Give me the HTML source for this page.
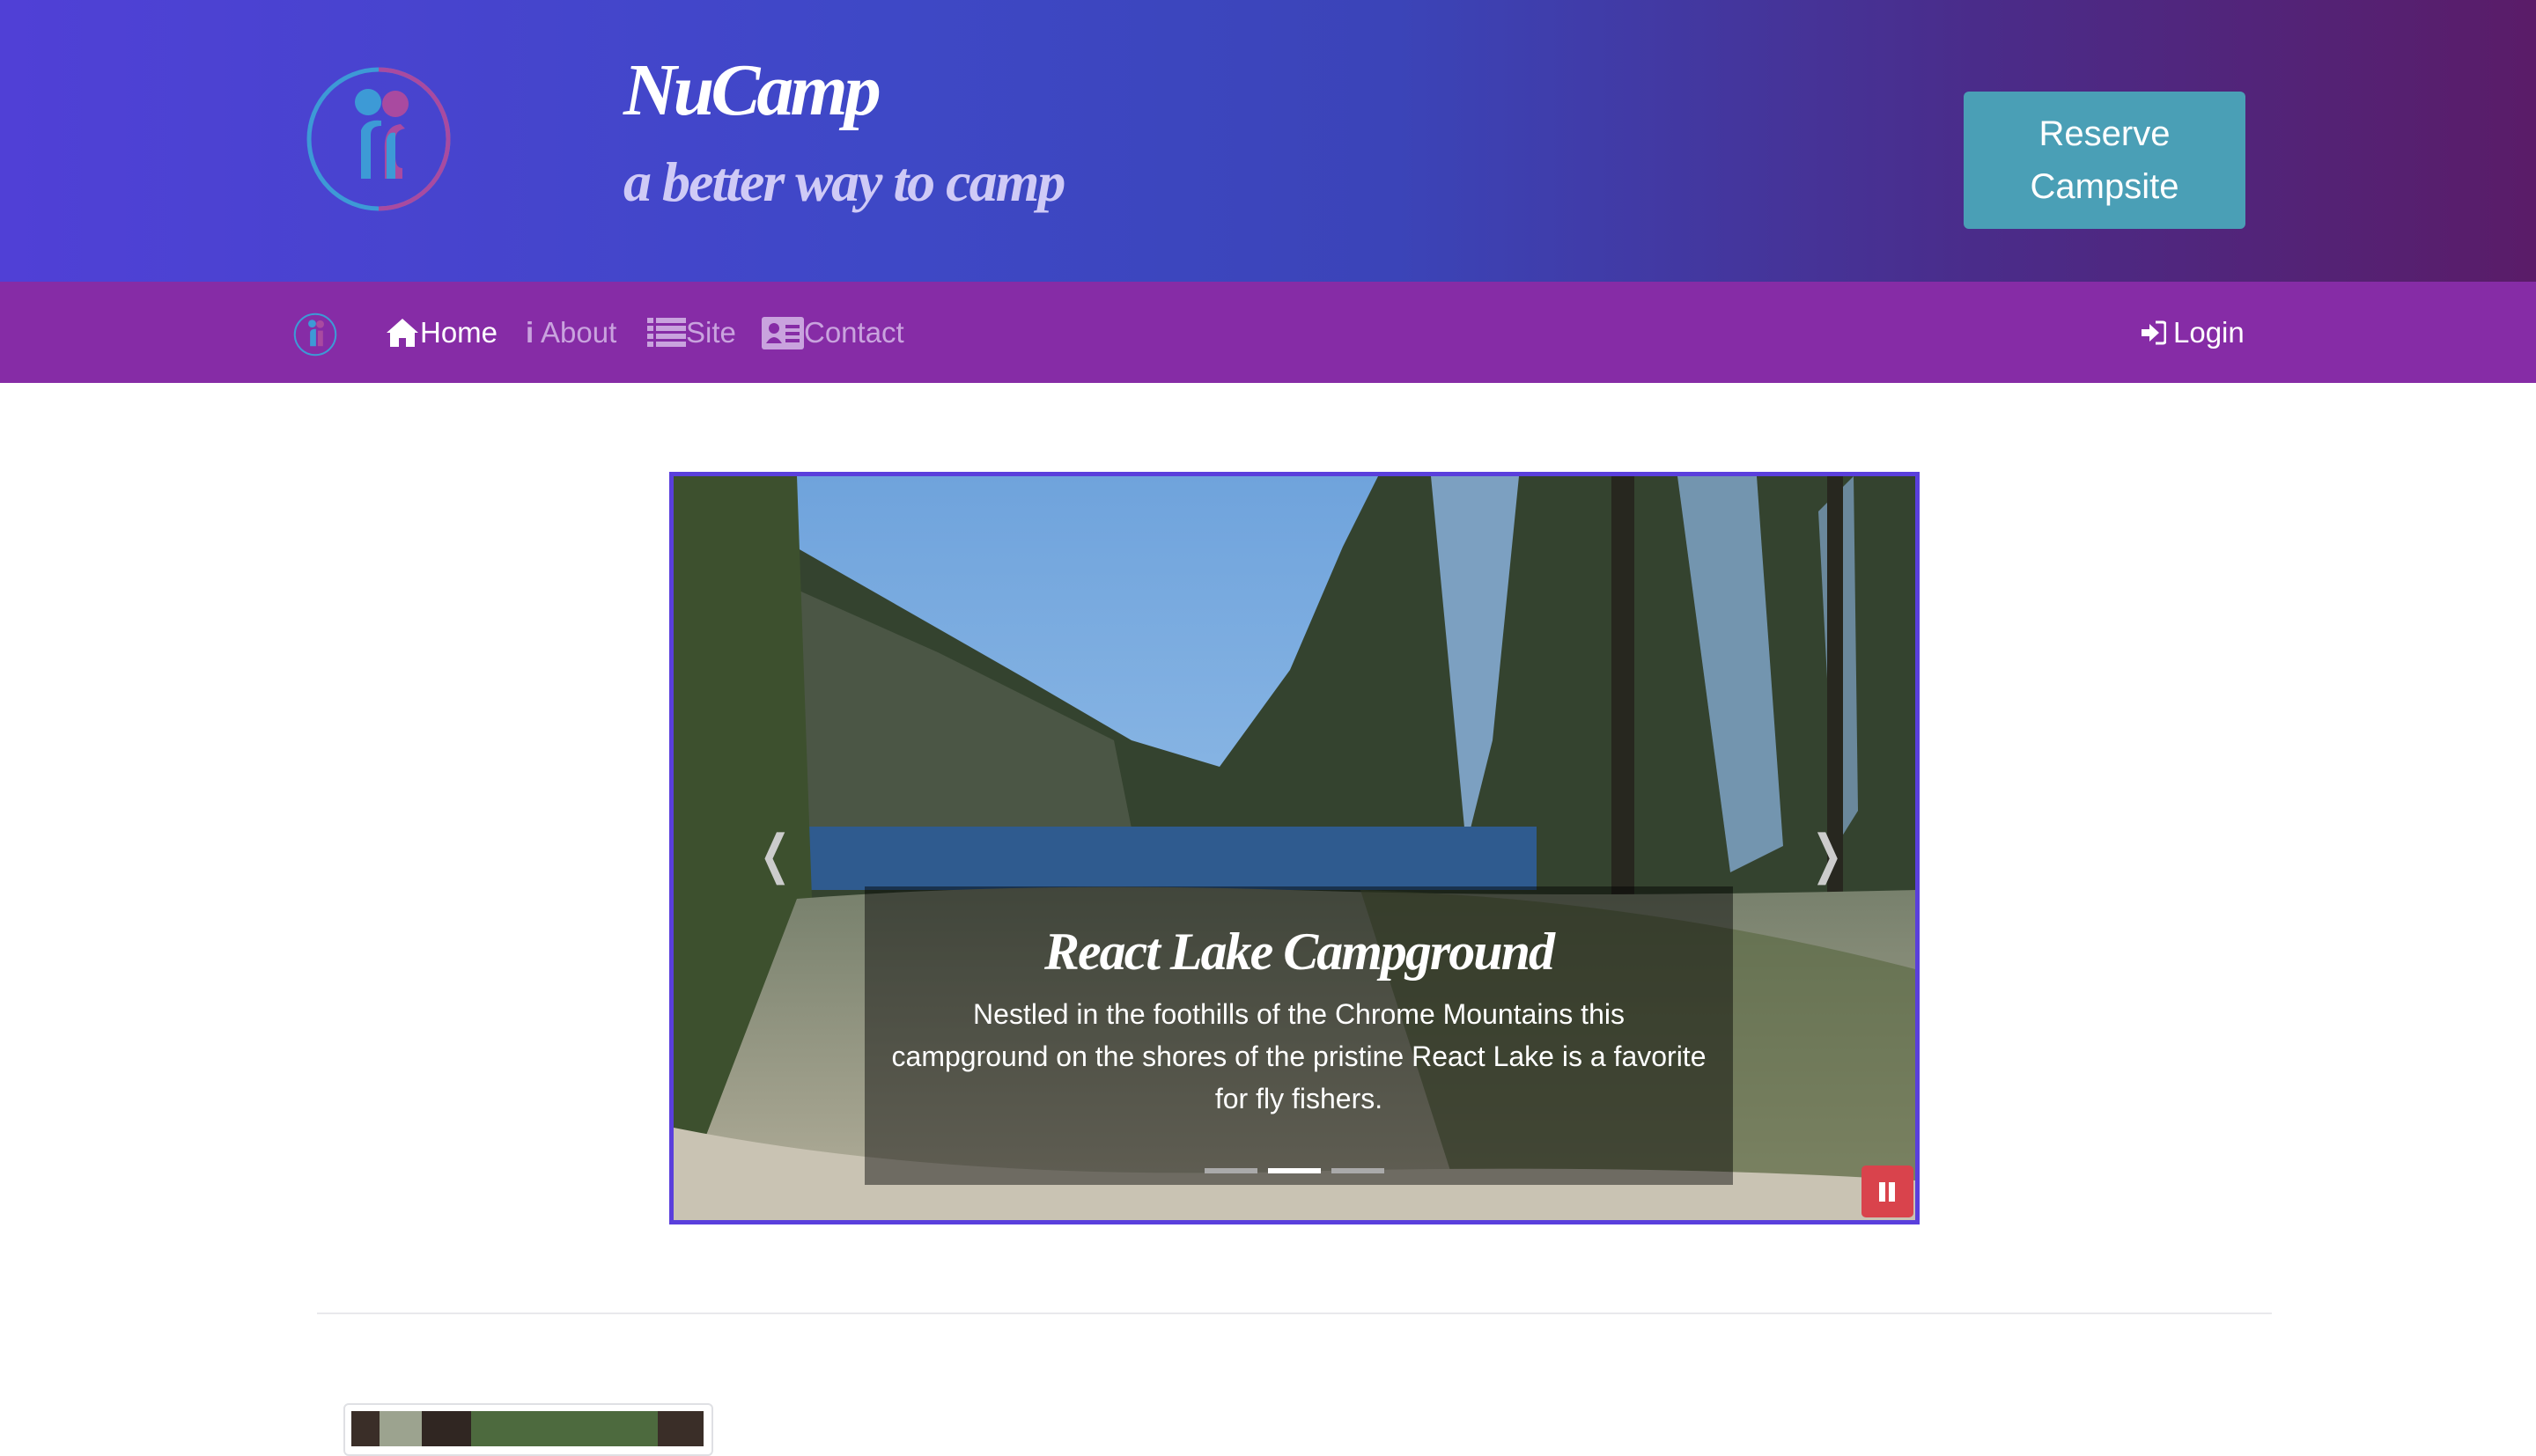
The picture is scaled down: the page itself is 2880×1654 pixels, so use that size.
<!DOCTYPE html>
<html><head><meta charset="utf-8">
<style>
*{margin:0;padding:0;box-sizing:border-box}
body{width:2880px;height:1636px;overflow:hidden;background:#fff;font-family:"Liberation Sans",sans-serif;position:relative}
.hdr{position:absolute;left:0;top:0;width:2880px;height:320px;background:linear-gradient(90deg,#5040d6 0%,#3e48c6 35%,#3b44b8 55%,#4a2c8a 78%,#5a1c68 100%)}
.nav{position:absolute;left:0;top:320px;width:2880px;height:115px;background:#862ca6}
.t1{position:absolute;left:708px;top:54px;font-family:"Liberation Serif",serif;font-style:italic;font-weight:bold;font-size:84px;color:#fff;letter-spacing:-4px}
.t2{position:absolute;left:708px;top:170px;font-family:"Liberation Serif",serif;font-style:italic;font-weight:bold;font-size:64px;color:#cfcaf6;letter-spacing:-2px}
.btn{position:absolute;left:2230px;top:104px;width:320px;height:156px;background:#4a9fb6;border-radius:6px;color:#fff;font-size:40px;text-align:center;line-height:60px;padding-top:18px}
.ni{position:absolute;top:359px;font-size:33px;color:#c9a3de}
.car{position:absolute;left:760px;top:536px;width:1420px;height:855px;border:5px solid #5a3fdc;overflow:hidden}
.cap{position:absolute;left:217px;top:466px;width:986px;height:339px;background:rgba(0,0,0,.45);text-align:center;color:#fff}
.cap h2{font-family:"Liberation Serif",serif;font-style:italic;font-weight:bold;font-size:60px;margin-top:40px;letter-spacing:-2px}
.cap p{font-size:32px;line-height:48px;margin-top:12px}
</style></head><body>
<div class="hdr"></div>
<svg style="position:absolute;left:345px;top:73px" width="170" height="170" viewBox="0 0 170 170">
<circle cx="85" cy="85" r="79" fill="none" stroke="#3d9ad6" stroke-width="5"/>
<path d="M85 6 A79 79 0 0 1 85 164" fill="none" stroke="#a94aa0" stroke-width="5"/>
<circle cx="73" cy="43" r="15" fill="#3d9ad6"/><circle cx="104" cy="45" r="15" fill="#a94aa0"/>
<path d="M65 130 V75 Q70 62 88 64 L88 70 Q76 70 76 80 V130Z" fill="#3d9ad6"/>
<path d="M110 68 Q90 70 92 100 V130 H112 L112 118 Q104 118 104 105 V85 Q104 75 115 73Z" fill="#a94aa0"/>
<path d="M94 130 V86 Q96 76 104 78 V130Z" fill="#3d9ad6"/>
</svg>
<div class="t1">NuCamp</div>
<div class="t2">a better way to camp</div>
<div class="btn">Reserve<br>Campsite</div>
<div class="nav"></div>
<svg style="position:absolute;left:333px;top:355px" width="50" height="50" viewBox="0 0 170 170">
<circle cx="85" cy="85" r="79" fill="none" stroke="#3d9ad6" stroke-width="7"/>
<circle cx="73" cy="43" r="15" fill="#3d9ad6"/><circle cx="104" cy="45" r="15" fill="#a94aa0"/>
<path d="M65 130 V75 Q70 62 88 64 V130Z" fill="#3d9ad6"/><path d="M95 130 V70 H115 V130Z" fill="#a94aa0"/>
</svg>
<svg style="position:absolute;left:437px;top:360px" width="40" height="36" viewBox="0 0 40 36"><path d="M20 2 L2 18 L6 18 L6 34 L16 34 L16 24 L24 24 L24 34 L34 34 L34 18 L38 18 Z" fill="#fff"/></svg>
<div class="ni" style="left:477px;color:#fff">Home</div>
<div class="ni" style="left:597px;font-weight:bold">i</div>
<div class="ni" style="left:614px">About</div>
<svg style="position:absolute;left:735px;top:361px" width="44" height="34" viewBox="0 0 44 34" fill="#c9a3de"><rect x="0" y="0" width="7" height="6"/><rect x="10" y="0" width="34" height="6"/><rect x="0" y="9" width="7" height="6"/><rect x="10" y="9" width="34" height="6"/><rect x="0" y="18" width="7" height="6"/><rect x="10" y="18" width="34" height="6"/><rect x="0" y="27" width="7" height="6"/><rect x="10" y="27" width="34" height="6"/></svg>
<div class="ni" style="left:779px">Site</div>
<svg style="position:absolute;left:865px;top:360px" width="48" height="37" viewBox="0 0 48 37"><rect width="48" height="37" rx="3" fill="#c9a3de"/><circle cx="14" cy="13" r="6" fill="#862ca6"/><path d="M5 30 Q14 16 23 30Z" fill="#862ca6"/><rect x="27" y="9" width="16" height="4" fill="#862ca6"/><rect x="27" y="17" width="16" height="4" fill="#862ca6"/><rect x="27" y="25" width="16" height="4" fill="#862ca6"/></svg>
<div class="ni" style="left:913px">Contact</div>
<svg style="position:absolute;left:2432px;top:364px" width="28" height="28" viewBox="0 0 28 28"><path d="M0 10 H9 V4 L20 14 L9 24 V18 H0Z" fill="#fff"/><path d="M16 2 H24 Q27 2 27 5 V23 Q27 26 24 26 H16" fill="none" stroke="#fff" stroke-width="3"/></svg>
<div class="ni" style="left:2468px;color:#fff">Login</div>

<div class="car">
<svg width="1410" height="845" viewBox="0 0 1410 845" style="position:absolute;left:0;top:0">
<defs><linearGradient id="sk" x1="0" y1="0" x2="0" y2="1"><stop offset="0" stop-color="#6fa3dc"/><stop offset="1" stop-color="#a9cdee"/></linearGradient>
<linearGradient id="gr" x1="0" y1="0" x2="0" y2="1"><stop offset="0" stop-color="#77806c"/><stop offset="1" stop-color="#b5b09c"/></linearGradient></defs>
<rect width="1410" height="845" fill="url(#sk)"/>
<path d="M0 40 L120 70 L260 150 L400 230 L520 300 L620 330 L700 220 L760 80 L800 0 L1410 0 L1410 845 L0 845Z" fill="#34432f"/>
<path d="M120 120 L300 200 L500 300 L520 400 L120 400Z" fill="#5f6657" opacity=".55"/>
<path d="M860 0 L960 0 L930 300 L900 420Z" fill="#8fb8e6" opacity=".8"/>
<path d="M1140 0 L1230 0 L1260 420 L1200 450Z" fill="#8fb8e6" opacity=".7"/>
<path d="M1300 40 L1340 0 L1345 380 L1320 420Z" fill="#8fb8e6" opacity=".6"/>
<rect x="100" y="398" width="880" height="72" fill="#2f5b8f"/>
<path d="M0 0 H140 L170 845 H0Z" fill="#3d502e"/>
<rect x="1065" y="0" width="26" height="845" fill="#27271f"/><rect x="1310" y="0" width="18" height="845" fill="#27271f"/>
<path d="M140 480 Q400 460 700 470 Q1000 480 1410 470 L1410 845 L0 845Z" fill="url(#gr)"/>
<path d="M780 470 Q1100 480 1410 560 L1410 845 L900 845Z" fill="#56653e" opacity=".6"/>
<path d="M0 740 Q300 800 700 790 Q1100 780 1410 800 L1410 845 L0 845Z" fill="#c9c3b3"/>
</svg>
<div style="position:absolute;left:90px;top:395px;font-size:60px;color:#ccc;transform:scaleX(.7)">❮</div>
<div style="position:absolute;left:1285px;top:395px;font-size:60px;color:#ccc;transform:scaleX(.7)">❯</div>
<div class="cap"><h2>React Lake Campground</h2>
<p>Nestled in the foothills of the Chrome Mountains this<br>campground on the shores of the pristine React Lake is a favorite<br>for fly fishers.</p></div>
<div style="position:absolute;left:603px;top:786px;width:60px;height:6px;background:#aaa"></div>
<div style="position:absolute;left:675px;top:786px;width:60px;height:6px;background:#fff"></div>
<div style="position:absolute;left:747px;top:786px;width:60px;height:6px;background:#aaa"></div>
<div style="position:absolute;left:1349px;top:783px;width:59px;height:59px;background:#d9434c;border-radius:5px"><div style="position:absolute;left:20px;top:19px;width:7px;height:22px;background:#fff"></div><div style="position:absolute;left:31px;top:19px;width:7px;height:22px;background:#fff"></div></div>
</div>
<div style="position:absolute;left:360px;top:1491px;width:2220px;height:2px;background:#e9e9ec"></div>
<div style="position:absolute;left:390px;top:1594px;width:420px;height:60px;border:2px solid #dfe0e4;border-radius:6px"></div>
<div style="position:absolute;left:399px;top:1603px;width:400px;height:40px;background:linear-gradient(90deg,#3a2e28 0 8%,#9ca38f 8% 20%,#302622 20% 34%,#4d6a3e 34% 87%,#3a2e28 87% 100%)"></div>
</body></html>
